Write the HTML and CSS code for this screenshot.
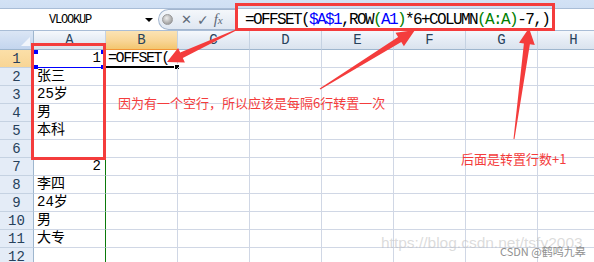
FILE: index.html
```html
<!DOCTYPE html>
<html>
<head>
<meta charset="utf-8">
<link rel="stylesheet" href="styles.css">
</head>
<body>
<div class="app">
  <div class="fbar">
    <div class="fbar-inner">
      <div class="namebox"><span class="nb-text">VLOOKUP</span><span class="nb-arrow"></span></div>
      <div class="pill"><span class="dot"></span><span class="btn-x">✕</span><span class="btn-ok">✓</span><span class="btn-fx">f<span class="fx-x">x</span></span></div>
      <div class="formula">=OFFSET(<span class="ref-blue">$A$1</span>,ROW<span class="ref-green">(</span><span class="ref-blue">A1</span><span class="ref-green">)</span>*6+COLUMN<span class="ref-green">(A:A)</span>-7,)</div>
    </div>
  </div>

  <div class="sheet">
    <div class="corner"><span class="corner-tri"></span></div>
    <div class="colhead">A</div>
    <div class="colhead sel">B</div>
    <div class="colhead">C</div>
    <div class="colhead">D</div>
    <div class="colhead">E</div>
    <div class="colhead">F</div>
    <div class="colhead">G</div>
    <div class="colhead">H</div>

    <div class="rowhead sel">1</div>
    <div class="cell colA num refcell">1<span class="h h-tl"></span><span class="h h-tr"></span><span class="h h-bl"></span><span class="h h-br"></span></div>
    <div class="cell editing">=OFFSET(<span class="fill-handle"></span></div>
    <div class="cell"></div><div class="cell"></div><div class="cell"></div><div class="cell"></div><div class="cell"></div><div class="cell"></div>

    <div class="rowhead">2</div>
    <div class="cell colA">张三</div>
    <div class="cell"></div><div class="cell"></div><div class="cell"></div><div class="cell"></div><div class="cell"></div><div class="cell"></div><div class="cell"></div>

    <div class="rowhead">3</div>
    <div class="cell colA">25岁</div>
    <div class="cell"></div><div class="cell"></div><div class="cell"></div><div class="cell"></div><div class="cell"></div><div class="cell"></div><div class="cell"></div>

    <div class="rowhead">4</div>
    <div class="cell colA">男</div>
    <div class="cell"></div><div class="cell"></div><div class="cell"></div><div class="cell"></div><div class="cell"></div><div class="cell"></div><div class="cell"></div>

    <div class="rowhead">5</div>
    <div class="cell colA">本科</div>
    <div class="cell"></div><div class="cell"></div><div class="cell"></div><div class="cell"></div><div class="cell"></div><div class="cell"></div><div class="cell"></div>

    <div class="rowhead">6</div>
    <div class="cell colA"></div>
    <div class="cell"></div><div class="cell"></div><div class="cell"></div><div class="cell"></div><div class="cell"></div><div class="cell"></div><div class="cell"></div>

    <div class="rowhead">7</div>
    <div class="cell colA num">2</div>
    <div class="cell"></div><div class="cell"></div><div class="cell"></div><div class="cell"></div><div class="cell"></div><div class="cell"></div><div class="cell"></div>

    <div class="rowhead">8</div>
    <div class="cell colA">李四</div>
    <div class="cell"></div><div class="cell"></div><div class="cell"></div><div class="cell"></div><div class="cell"></div><div class="cell"></div><div class="cell"></div>

    <div class="rowhead">9</div>
    <div class="cell colA">24岁</div>
    <div class="cell"></div><div class="cell"></div><div class="cell"></div><div class="cell"></div><div class="cell"></div><div class="cell"></div><div class="cell"></div>

    <div class="rowhead">10</div>
    <div class="cell colA">男</div>
    <div class="cell"></div><div class="cell"></div><div class="cell"></div><div class="cell"></div><div class="cell"></div><div class="cell"></div><div class="cell"></div>

    <div class="rowhead">11</div>
    <div class="cell colA">大专</div>
    <div class="cell"></div><div class="cell"></div><div class="cell"></div><div class="cell"></div><div class="cell"></div><div class="cell"></div><div class="cell"></div>

    <div class="rowhead">12</div>
    <div class="cell colA"></div>
    <div class="cell"></div><div class="cell"></div><div class="cell"></div><div class="cell"></div><div class="cell"></div><div class="cell"></div><div class="cell"></div>
  </div>

  <div class="box box-formula"></div>
  <div class="box box-colA"></div>

  <svg class="arrows" width="594" height="262" viewBox="0 0 594 262">
    <polygon points="236.2,30.5 182.8,58.0 184.9,62.6 167,62 178.1,48.0 180.2,52.6 235.8,29.5"/>
    <polygon points="319.7,88.6 398.1,37.0 395.5,32.7 415,30 403.9,46.3 401.3,42.0 320.3,89.4"/>
    <polygon points="513.5,138.9 523.9,43.5 519.0,42.8 529,28 534.8,45.0 529.9,44.3 514.5,139.1"/>
  </svg>

  <div class="note note-1">因为有一个空行，所以应该是每隔6行转置一次</div>
  <div class="note note-2">后面是转置行数+1</div>

  <div class="wm-url">https://blog.csdn.net/tsfy2003</div>
  <div class="wm-name">CSDN @鹤鸣九皋</div>
</div>
</body>
</html>
```

FILE: styles.css
```css
* { box-sizing: border-box; }
html, body { margin: 0; padding: 0; }
body {
  width: 594px;
  height: 262px;
  overflow: hidden;
  background: #ffffff;
  font-family: "Liberation Mono", "Noto Sans CJK SC", monospace;
}
.app {
  position: relative;
  width: 594px;
  height: 262px;
  overflow: hidden;
}

/* formula bar */
.fbar {
  height: 31px;
  padding-top: 8px;
  background: linear-gradient(#d3e2f5, #c4d7ef);
}
.fbar-inner {
  display: flex;
  height: 23px;
  border-top: 1px solid #a9bdd6;
  border-bottom: 1px solid #a9bdd6;
  background: #ffffff;
}
.namebox {
  width: 158px;
  display: flex;
  align-items: center;
}
.nb-text {
  width: 140px;
  text-align: center;
  font-size: 12px;
  letter-spacing: -1.2px;
  color: #000;
}
.nb-arrow {
  margin-left: 5px;
  width: 0;
  height: 0;
  border-left: 4px solid transparent;
  border-right: 4px solid transparent;
  border-top: 4px solid #000;
}
.pill {
  width: 79px;
  height: 21px;
  display: flex;
  align-items: center;
  border: 1px solid #a3b6cf;
  border-right: none;
  border-radius: 11px 0 0 11px;
  background: linear-gradient(#f4f7fb, #dfe7f1);
  padding-left: 3px;
}
.dot {
  width: 11px;
  height: 11px;
  border-radius: 50%;
  background: radial-gradient(circle at 40% 35%, #eeeeee, #a5a5a5 70%, #8c8c8c);
  border: 1px solid #9a9a9a;
}
.btn-x {
  margin-left: 8px;
  font-family: "DejaVu Sans", sans-serif;
  font-size: 13px;
  font-weight: bold;
  color: #5f6a78;
}
.btn-ok {
  margin-left: 5px;
  font-family: "DejaVu Sans", sans-serif;
  font-size: 14px;
  font-weight: bold;
  color: #5f6a78;
}
.btn-fx {
  margin-left: 5px;
  font-family: "Liberation Serif", serif;
  font-style: italic;
  font-size: 15px;
  color: #5f6a78;
}
.fx-x { font-size: 11px; }
.formula {
  flex: 1;
  padding-left: 8px;
  display: flex;
  align-items: center;
  white-space: pre;
  font-size: 16px;
  letter-spacing: -1.6px;
  color: #000;
}
.ref-blue { color: #0000ff; }
.ref-green { color: #008000; }

/* sheet grid */
.sheet {
  display: grid;
  grid-template-columns: 34px repeat(8, 72px);
  grid-template-rows: 19px;
  grid-auto-rows: 18px;
}
.corner {
  position: relative;
  background: linear-gradient(#dbe6f5, #c3d5ee);
  border-right: 1px solid #9eb6ce;
  border-bottom: 1px solid #9eb6ce;
}
.corner-tri {
  position: absolute;
  right: 3px;
  bottom: 3px;
  width: 0;
  height: 0;
  border-left: 9px solid transparent;
  border-bottom: 9px solid #f1f5fb;
}
.colhead {
  display: flex;
  align-items: center;
  justify-content: center;
  background: linear-gradient(#f5f8fc, #e4ebf4 55%, #dae3ee);
  border-right: 1px solid #c5d2e2;
  border-bottom: 1px solid #9eb6ce;
  color: #27415b;
  font-size: 14px;
}
.colhead.sel {
  background: linear-gradient(#fbe3b4, #f8d595 55%, #f3c66f);
  border-bottom-color: #f29536;
}
.rowhead {
  display: flex;
  align-items: center;
  justify-content: center;
  background: #e4ecf7;
  border-right: 1px solid #9eb6ce;
  border-bottom: 1px solid #c5d2e2;
  color: #27415b;
  font-size: 14px;
}
.rowhead.sel {
  background: linear-gradient(#fbdfa8, #f8d595);
  border-right-color: #f29536;
}
.cell {
  position: relative;
  border-right: 1px solid #d0d7e5;
  border-bottom: 1px solid #d0d7e5;
  padding-left: 3px;
  font-size: 14px;
  line-height: 17px;
  color: #000;
  white-space: nowrap;
}
.cell.colA { border-right-color: #0b7a0b; }
.cell.num { text-align: right; padding-right: 4px; }
.refcell {
  border-bottom: 1px solid #0000ff;
}
.h {
  position: absolute;
  width: 4px;
  height: 4px;
  background: #0000ff;
}
.h-tl { left: 0; top: 0; }
.h-tr { right: 0; top: 0; }
.h-bl { left: 0; bottom: -2px; }
.h-br { right: 0; bottom: -2px; }
.editing {
  padding-left: 2px;
  font-size: 15px;
  letter-spacing: -1.4px;
  border-bottom: 2px solid #000;
}
.fill-handle {
  position: absolute;
  right: -3px;
  bottom: -4px;
  width: 6px;
  height: 6px;
  background: #000;
  border: 1px solid #fff;
}

/* annotations */
.box {
  position: absolute;
  border: 3px solid #f43c3c;
}
.box-formula { left: 235px; top: 3px; width: 320px; height: 28px; }
.box-colA { left: 31px; top: 43px; width: 75px; height: 117px; }
.arrows {
  position: absolute;
  left: 0;
  top: 0;
}
.arrows polygon { fill: #f43c3c; }
.note {
  position: absolute;
  font-family: "Noto Sans CJK SC", sans-serif;
  font-size: 13px;
  line-height: 14px;
  color: #f43c3c;
  white-space: nowrap;
}
.note-1 { left: 118px; top: 96px; }
.note-2 { left: 461px; top: 152px; }
.wm-url {
  position: absolute;
  left: 381px;
  top: 234px;
  font-family: "Liberation Sans", sans-serif;
  font-size: 15.5px;
  line-height: 18px;
  color: rgba(190, 190, 190, 0.55);
  white-space: nowrap;
}
.wm-name {
  position: absolute;
  left: 500px;
  top: 245px;
  font-family: "Noto Sans CJK SC", sans-serif;
  font-size: 11px;
  line-height: 12px;
  color: #8f8f8f;
  white-space: nowrap;
}
```
